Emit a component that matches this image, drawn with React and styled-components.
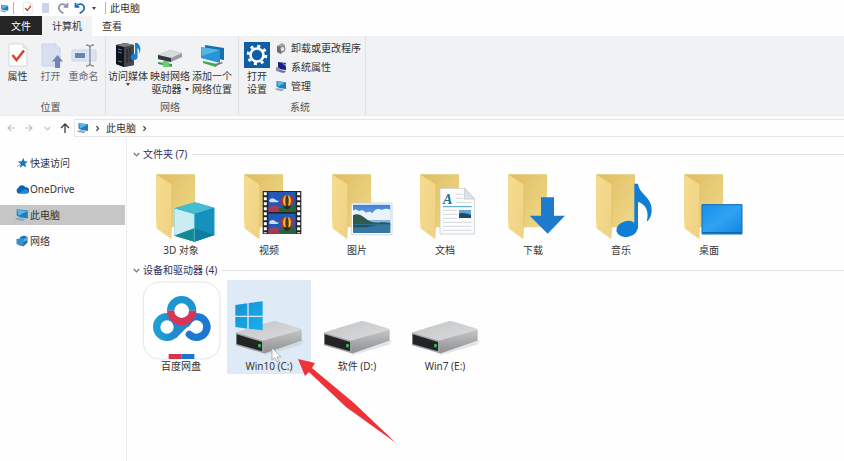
import React, { useState } from "react";
import styled, { createGlobalStyle } from "styled-components";

const GlobalStyle = createGlobalStyle`
  * {
    box-sizing: border-box;
  }

  body {
    margin: 0;
    background-color: #fefefe;
  }

  button {
    margin: 0;
    padding: 0;
    border: none;
    background: transparent;
    color: inherit;
    font: inherit;
  }

  svg {
    display: block;
    flex-shrink: 0;
  }
`;

const Window = styled.div`
  min-height: 100vh;
  display: flex;
  flex-direction: column;
  color: #333;
  font-family: "Noto Sans", "Noto Sans CJK SC", sans-serif;
  font-size: 10px;
  line-height: 14px;
`;

const TitleBar = styled.header`
  height: 16px;
  display: flex;
  align-items: center;
`;

const QuickButton = styled.button`
  width: ${({ $width }) => $width || 15}px;
  height: 16px;
  display: flex;
  align-items: center;
  justify-content: center;
`;

const Divider = styled.span`
  width: 1px;
  height: 12px;
  margin: 0 4px;
  background-color: #b5b5b5;
`;

const Title = styled.h1`
  margin: 0;
  font-size: 10px;
  font-weight: 400;
`;

const Tabs = styled.nav`
  height: 20px;
  display: flex;
`;

const Tab = styled.button`
  padding: 0 10px;
  color: #333;
  background-color: ${({ $active }) => ($active ? "#f1f2f4" : "transparent")};
`;

const FileTab = styled(Tab)`
  width: 42px;
  height: 19px;
  color: #fff;
  background-color: #262626;
`;

const Ribbon = styled.section`
  display: flex;
  background-color: #f1f2f4;
  border-bottom: 1px solid #ebecee;
`;

const Group = styled.div`
  padding: 5px 4px 0 0;
  display: flex;
  flex-direction: column;
  border-right: 1px solid #dfe0e3;
`;

const GroupBody = styled.div`
  display: flex;
  height: 55px;
  padding: 0 ${({ $pad }) => $pad || 0}px;
`;

const GroupLabel = styled.div`
  padding: 4px 0 1px;
  text-align: center;
  color: #555;
`;

const RibbonButton = styled.button`
  width: ${({ $width }) => $width}px;
  display: flex;
  flex-direction: column;
  align-items: center;
  line-height: 13px;
  white-space: nowrap;
  color: ${({ $dim }) => ($dim ? "#6c6c70" : "#333")};

  svg + span {
    margin-top: 1px;
  }
`;

const Caption = styled.span`
  display: flex;
  align-items: center;
  gap: 3px;
`;

const SmallList = styled.div`
  display: flex;
  flex-direction: column;
  gap: 5px;
`;

const SmallButton = styled.button`
  display: flex;
  align-items: center;
  gap: 4px;
`;

const AddressRow = styled.div`
  margin-top: 3px;
  padding-left: 2px;
  height: 18px;
  display: flex;
  align-items: center;
`;

const NavButton = styled.button`
  width: 18px;
  height: 18px;
  display: flex;
  align-items: center;
  justify-content: center;
`;

const AddressBox = styled.div`
  flex: 1;
  height: 18px;
  padding-left: 2px;
  display: flex;
  align-items: center;
  gap: 5px;
  border: 1px solid #e6e6e8;
  border-right: none;
`;

const Body = styled.div`
  flex: 1;
  display: flex;
`;

const Sidebar = styled.nav`
  width: 127px;
  padding: 16px 1px 0 0;
  display: flex;
  flex-direction: column;
  gap: 6px;
  border-right: 1px solid #efefef;
`;

const SideItem = styled.button`
  height: 20px;
  padding-left: 15px;
  display: flex;
  align-items: center;
  gap: 1px;
  background-color: ${({ $active }) => ($active ? "#c6c6c6" : "transparent")};
`;

const Content = styled.main`
  flex: 1;
  padding: 7px 0 0 6px;
`;

const SectionHeader = styled.h2`
  margin: 0;
  height: 20px;
  display: flex;
  align-items: center;
  gap: 3px;
  font-size: 10px;
  font-weight: 400;
  color: #2f3160;

  &::after {
    content: "";
    flex: 1;
    height: 1px;
    margin-left: 2px;
    background-color: #e2e2e4;
  }
`;

const Tiles = styled.div`
  padding: 0 0 2px 6px;
  display: grid;
  grid-template-columns: repeat(auto-fill, 84px);
  gap: 4px;
`;

const Slot = styled.div`
  position: relative;
`;

const Tile = styled.button`
  width: 84px;
  height: 94px;
  display: block;
  text-align: center;
  background-color: ${({ $selected }) => ($selected ? "#deeaf6" : "transparent")};

  svg {
    overflow: visible;
  }

  span {
    display: block;
    height: 16px;
    line-height: 16px;
  }
`;

const CursorIcon = styled.svg`
  position: absolute;
  left: 43px;
  top: 67px;
  pointer-events: none;
`;

const PointerArrow = styled.svg`
  position: absolute;
  left: 70px;
  top: 78px;
  z-index: 1;
  pointer-events: none;
`;

const Defs = styled.svg`
  position: absolute;
`;

const PcIcon = ({ size = 12 }) => (
  <svg width={size} height={size} viewBox="0 0 12 12">
    <path d="M1.5 1 11 2.2V9L4.5 8 1.5 6.6Z" fill="#1d7fc0" />
    <path d="M2.2 1.6 10.4 2.8 3 6.5Z" fill="#5cb7e6" />
    <path d="M.5 8.6 4 8.2 9 9.6 6.5 11.3.5 9.8Z" fill="#8fa9bd" />
  </svg>
);

const Caret = () => (
  <svg width="4" height="3" viewBox="0 0 4 3">
    <path d="M0 0H4L2 3Z" fill="#444" />
  </svg>
);

const Chevron = ({ down, color = "#444" }) => (
  <svg width="7" height="7" viewBox="0 0 7 7" fill="none" stroke={color} strokeWidth="1.2">
    <path d={down ? "M.8 2 3.5 4.8 6.2 2" : "M2.4 1.2 4.6 3.5 2.4 5.8"} />
  </svg>
);

const Turn = ({ flip, color }) => (
  <svg width="12" height="12" viewBox="0 0 12 12" fill="none" stroke={color} strokeWidth="1.7">
    <g transform={flip ? "translate(12 0) scale(-1 1)" : undefined}>
      <path d="M1.5 1V4.8H5.3" />
      <path d="M2 4.3C4 1.5 8 1.3 9.6 3.8 11.3 6.8 9 9.8 5.6 11.3" />
    </g>
  </svg>
);

const CheckDoc = ({ width, height }) => (
  <svg width={width} height={height} viewBox="0 0 24 28">
    <path d="M3 3H17L21 7V25H3Z" fill="#fff" stroke="#d5d7db" />
    <path d="M17 3V7H21" fill="#eceef1" stroke="#d5d7db" />
    <path d="M6.5 14 10.5 19 18 9.5" fill="none" stroke="#cf4a2c" strokeWidth="2.6" />
  </svg>
);

const OpenIcon = () => (
  <svg width="28" height="28" viewBox="0 0 28 28">
    <path d="M5 3H19L23 7V25H5Z" fill="#d8e0f0" stroke="#c8d2e6" />
    <path d="M19 3V7H23" fill="#eef2f9" stroke="#c8d2e6" />
    <path d="M20.500 14 26 20.500H23V27H18V20.500H15Z" fill="#7286ad" />
  </svg>
);

const RenameIcon = () => (
  <svg width="28" height="28" viewBox="0 0 28 28">
    <path d="M2 9H26V20H2Z" fill="#dbe4f3" stroke="#c9d5e8" />
    <path d="M5 12H15V17H5Z" fill="#6c84ab" />
    <path d="M16 4Q20 4 20 7Q20 4 24 4M20 7V22M16 25Q20 25 20 22Q20 25 24 25" fill="none" stroke="#8a8d94" strokeWidth="1.4" />
  </svg>
);

const MediaIcon = () => (
  <svg width="28" height="28" viewBox="0 0 28 28">
    <path d="M2 4 11 2 20 4V24L10 26 2 23Z" fill="#2b2e33" />
    <path d="M2 4 10 6V26L2 23Z" fill="#111418" />
    <path d="M10 6 20 4V24L10 26Z" fill="#43474e" />
    <path d="M2 4 11 2 20 4 10 6Z" fill="#777d86" />
    <path d="M4 8 8 9M4 11 8 12M4 20 8 21" stroke="#3f86c9" />
    <path d="M13 8V22M16 7V21" stroke="#222" />
    <ellipse cx="20" cy="16" rx="3.500" ry="3" fill="#1681cf" />
    <path d="M21 16V2H23.500Q28 6 25.500 13Q25.500 8 23.500 7V16Z" fill="#1681cf" />
  </svg>
);

const MapDriveIcon = () => (
  <svg width="28" height="28" viewBox="0 0 28 28">
    <path d="M2 14 14 9 26 12V16L15 21 2 18Z" fill="#999da1" />
    <path d="M2 14 14 9 26 12 15 17Z" fill="#d9dadc" />
    <path d="M2 14 15 17V21L2 18Z" fill="#33383b" />
    <path d="M2 21 16 23V26L2 23Z" fill="#3c9f4c" />
    <path d="M7 20H13V26H7Z" fill="#6ecb75" />
  </svg>
);

const NetPlaceIcon = () => (
  <svg width="28" height="28" viewBox="0 0 28 28">
    <path d="M7 4 26 7V19L7 16Z" fill="#1770ad" />
    <path d="M3 6 22 9V22L3 17Z" fill="#2894d3" />
    <path d="M3 6 22 9 4 15Z" fill="#55b6e6" />
    <path d="M5 20 19 23 18 26 5 22Z" fill="#3fa653" />
    <path d="M17 23 24 21 25 22 18 25Z" fill="#777" />
  </svg>
);

const SettingsIcon = () => (
  <svg width="28" height="28" viewBox="0 0 28 28">
    <path d="M1 1H27V27H1Z" fill="#0f5fa8" />
    <circle cx="14" cy="14" r="6.500" fill="none" stroke="#fff" strokeWidth="2.600" />
    <circle cx="14" cy="14" r="8.800" fill="none" stroke="#fff" strokeWidth="3" strokeDasharray="3.000 3.911" />
  </svg>
);

const UninstallIcon = () => (
  <svg width="12" height="12" viewBox="0 0 12 12">
    <path d="M2 4 7 1 10 3V9L6 12 2 10Z" fill="#aaa39a" />
    <path d="M2 4 6 5V12L2 10Z" fill="#706b66" />
    <circle cx="7.500" cy="7" r="2.500" fill="#e6e6e6" stroke="#777" />
  </svg>
);

const SystemIcon = () => (
  <svg width="12" height="12" viewBox="0 0 12 12">
    <path d="M3 1 11 2V9L3 8Z" fill="#1b1f86" />
    <path d="M7 2 11 3V6Z" fill="#7c8df0" />
    <path d="M1 6 5 7V11L1 10Z" fill="#8a93a5" />
    <path d="M5 9 11 10 9 12 4 11Z" fill="#6a6f96" />
  </svg>
);

const StarIcon = () => (
  <svg width="14" height="14" viewBox="0 0 14 14">
    <path d="M8.500 2 9.500 5.300 13 5.600 10.200 7.800 11.200 11.500 8 9.400 4.800 11.800 5.600 8 3 5.600 6.600 5.300Z" fill="#1a78bd" />
    <path d="M2 10.500 5 8.500" stroke="#69add8" />
  </svg>
);

const CloudIcon = () => (
  <svg width="14" height="14" viewBox="0 0 14 14">
    <path d="M3.500 11.500A3 3 0 0 1 3.200 6 4 4 0 0 1 10.400 5.300 3 3 0 0 1 11.500 11.500Z" fill="#0f62b5" />
    <path d="M3.500 11.500 9.500 7.500A3 3 0 0 1 13.600 9.800 2 2 0 0 1 11.500 11.500Z" fill="#1f8ade" />
  </svg>
);

const NetworkIcon = () => (
  <svg width="14" height="14" viewBox="0 0 14 14">
    <path d="M5 3 9 1.500 12.500 3V8.500L8.500 12.500 5 11Z" fill="#1d72b4" />
    <path d="M1.500 5 6.500 4 8.500 5V11L5.500 12 1.500 10Z" fill="#3a8fcb" />
    <path d="M8.500 5 12.500 3V6L8.500 8Z" fill="#5eb0e2" />
  </svg>
);

// every tile drawing uses a 252x234 canvas, three units to the pixel
const TileArt = ({ children }) => (
  <svg width="84" height="78" viewBox="0 0 252 234">
    {children}
  </svg>
);

const Folder = ({ children }) => (
  <TileArt>
    <path d="M52 31H168V190H90L52 170Z" fill="url(#folderBack)" />
    <path d="M52 31 92 56Q99 61 99 68V190L97 226 52 193Z" fill="url(#folderFront)" />
    <path d="M52 31 92 56Q99 61 99 68V190" fill="none" stroke="#d6b757" strokeWidth="1.500" />
    {children}
  </TileArt>
);

const Gradients = () => (
  <Defs width="0" height="0" aria-hidden="true">
    <defs>
      <linearGradient id="folderBack" x1="0" y1="0" x2="1" y2="1">
        <stop offset="0" stopColor="#dfbd62" />
        <stop offset="1" stopColor="#f0d98a" />
      </linearGradient>
      <linearGradient id="folderFront" x1="0" y1="0" x2="1" y2="1">
        <stop offset="0" stopColor="#f6dd91" />
        <stop offset="1" stopColor="#efd083" />
      </linearGradient>
      <linearGradient id="desktop" x1="0" y1="0" x2="1" y2="1">
        <stop offset="0" stopColor="#1590ea" />
        <stop offset="0.5" stopColor="#30a2f3" />
        <stop offset="1" stopColor="#0f86e0" />
      </linearGradient>
      <linearGradient id="driveTop" x1="0" y1="0" x2="1" y2="1">
        <stop offset="0" stopColor="#c3c4c6" />
        <stop offset="1" stopColor="#dcdddf" />
      </linearGradient>
      <linearGradient id="driveSide" x1="0" y1="0" x2="0" y2="1">
        <stop offset="0" stopColor="#c4c5c7" />
        <stop offset="1" stopColor="#8f9092" />
      </linearGradient>
      <linearGradient id="winLogo" x1="0" y1="0" x2="1" y2="1">
        <stop offset="0" stopColor="#1691d2" />
        <stop offset="1" stopColor="#18b0ec" />
      </linearGradient>
      <linearGradient id="panLeft" x1="0" y1="0" x2="1" y2="0">
        <stop offset="0" stopColor="#1e9fd6" />
        <stop offset="1" stopColor="#1b87cf" />
      </linearGradient>
      <linearGradient id="sky" x1="0" y1="0" x2="0" y2="1">
        <stop offset="0" stopColor="#3e7fd6" />
        <stop offset="1" stopColor="#b7daf5" />
      </linearGradient>
    </defs>
  </Defs>
);

const ObjectsArt = () => (
  <Folder>
    <path d="M168 115 226 131V213L166 233 106 215V133Z" fill="#2aa3bf" />
    <path d="M106 133 166 150V193L106 215Z" fill="#c9edf0" />
    <path d="M106 133 168 115 226 131 166 150Z" fill="#45bdd0" />
    <path d="M106 215 166 193 226 213 166 233Z" fill="#138a93" />
    <path d="M166 150V233L226 213V131Z" fill="#128bbb" opacity="0.8" />
    <path d="M166 193V233L226 213Z" fill="#0c6f92" opacity="0.5" />
    <path d="M166 150V233" stroke="#6fd0de" strokeWidth="2" />
  </Folder>
);

const Balloon = ({ y }) => (
  <g transform={`translate(124 ${y})`}>
    <path d="M0 0H82V60H0Z" fill="#2259b8" />
    <path d="M2 25Q10 14 20 22T34 24L28 31H4Z" fill="#c9dcf2" />
    <path d="M0 47Q14 36 30 44T56 40L82 46V60H0Z" fill="#a63a54" />
    <path d="M30 50Q50 38 82 42V60H34Z" fill="#246438" />
    <ellipse cx="56" cy="27" rx="20" ry="18" fill="#bb2b2d" />
    <ellipse cx="56" cy="27" rx="12" ry="18" fill="#eebc2f" />
    <ellipse cx="56" cy="27" rx="5" ry="18" fill="#4b3420" />
    <path d="M44 41H68L61 51H51Z" fill="#2d2a1c" />
  </g>
);

const VideoArt = () => (
  <Folder>
    <path d="M107 81H223V210H107Z" fill="#24252b" />
    <Balloon y={84} />
    <Balloon y={149} />
    <path d="M115 85V208M215 85V208" stroke="#fff" strokeWidth="9" strokeDasharray="9 6" />
  </Folder>
);

const PictureArt = () => (
  <Folder>
    <path d="M109 117H231V212H109Z" fill="#fff" stroke="#b9c4cc" strokeWidth="2" />
    <path d="M114 122H226V207H114Z" fill="url(#sky)" />
    <path d="M114 140Q124 132 132 142 144 134 152 146 166 140 172 148 184 128 200 138 216 130 226 138V168H114Z" fill="#e9f3fb" />
    <path d="M114 154Q130 144 150 162T200 174L226 176V184H114Z" fill="#2d5a4c" />
    <path d="M114 181H226V207H114Z" fill="#3577a0" />
    <path d="M114 184H190L150 190H114Z" fill="#214f58" />
  </Folder>
);

const DocumentArt = () => (
  <Folder>
    <path d="M111 73H186L214 104V210H111Z" fill="#fbfcfd" stroke="#bcc2c8" strokeWidth="2" />
    <path d="M184 73V105H214Z" fill="#dfe3e7" stroke="#bcc2c8" strokeWidth="2" />
    <path d="M158 91H180M158 103H180M158 115H206M120 139H162M120 151H162M120 163H162M120 175H206M120 187H206M120 199H206" stroke="#c2c9cf" strokeWidth="2" />
    <path d="M120 128H206" stroke="#4a9fc6" strokeWidth="3" />
    <text x="120" y="119" fontFamily="Liberation Serif, serif" fontSize="42" fontWeight="700" fontStyle="italic" fill="#1f6f97">
      A
    </text>
    <path d="M168 138H204V162H168Z" fill="#5fa3d8" />
    <path d="M168 149Q182 144 204 153V162H168Z" fill="#1d4c62" />
  </Folder>
);

const DownloadArt = () => (
  <Folder>
    <path d="M150 100H189V155H222L170 209 116 155H150Z" fill="#1c7ccb" />
  </Folder>
);

const MusicArt = () => (
  <Folder>
    <ellipse cx="144" cy="195" rx="32" ry="24" fill="#0f7fd6" transform="rotate(-12 144 195)" />
    <path d="M166 59H177C181 92 220 98 218 140 217 158 210 168 203 173 210 148 205 122 177 113V194H166Z" fill="#0f7fd6" />
  </Folder>
);

const DesktopArt = () => (
  <Folder>
    <path d="M105 122H225V210H105Z" fill="url(#desktop)" stroke="#0b6cb8" strokeWidth="3" />
    <path d="M107 206H224" stroke="#0b69ad" strokeWidth="4" />
  </Folder>
);

const BaiduArt = () => (
  <TileArt>
    <rect x="13" y="6" width="230" height="231" rx="48" fill="#fff" stroke="#e5e5e8" strokeWidth="3" />
    <g fill="none" strokeWidth="22">
      <circle cx="84" cy="141" r="31" stroke="url(#panLeft)" />
      <path d="M144 130C154 112 164 110 173 110A31 31 0 1 1 151 163" stroke="#1c79d2" strokeLinecap="round" />
      <path d="M104 166 152 118" stroke="#2489cc" />
      <path d="M95 92A33 33 0 0 1 161 92" stroke="#1c96cf" />
      <path d="M161 92A33 33 0 0 1 95 92" stroke="#d83655" />
    </g>
    <path d="M89 222H128V237H89Z" fill="#d3344c" />
    <path d="M128 222H166V237H128Z" fill="#1c74cf" />
  </TileArt>
);

const DriveArt = ({ windows }) => (
  <TileArt>
    <path d="M109 220 232 181 224 194 112 226Z" fill="#bfc2c5" opacity="0.4" />
    <path d="M27 160Q27 157 31 156L136 124Q142 122 148 124L218 145Q224 147 224 151L109 185Z" fill="url(#driveTop)" />
    <path d="M107 182 224 149V182L116 219Q109 221 107 218Z" fill="url(#driveSide)" />
    <path d="M27 158 109 182V220L27 196Z" fill="#a2a3a5" />
    <path d="M29 163 105 186V214L29 192Z" fill="#232426" />
    <path d="M94 192H101V202H94Z" fill="#36d04f" />
    {windows && (
      <path d="M25 75 61 70V107H25ZM65 69 107 64V107H65ZM25 111H61V146L25 141ZM65 111H107V151L65 146Z" fill="url(#winLogo)" />
    )}
  </TileArt>
);

const WindowsDrive = () => <DriveArt windows />;

const folders = [
  { name: "3D 对象", Art: ObjectsArt },
  { name: "视频", Art: VideoArt },
  { name: "图片", Art: PictureArt },
  { name: "文档", Art: DocumentArt },
  { name: "下载", Art: DownloadArt },
  { name: "音乐", Art: MusicArt },
  { name: "桌面", Art: DesktopArt },
];

const drives = [
  { name: "百度网盘", Art: BaiduArt },
  { name: "Win10 (C:)", Art: WindowsDrive, marked: true },
  { name: "软件 (D:)", Art: DriveArt },
  { name: "Win7 (E:)", Art: DriveArt },
];

const places = [
  { name: "快速访问", Icon: StarIcon },
  { name: "OneDrive", Icon: CloudIcon },
  { name: "此电脑", Icon: () => <PcIcon size={14} /> },
  { name: "网络", Icon: NetworkIcon },
];

const App = () => {
  const [place, setPlace] = useState("此电脑");
  const [selected, setSelected] = useState("Win10 (C:)");

  const renderTile = ({ name, Art, marked }) => (
    <Slot key={name}>
      <Tile $selected={selected === name} onClick={() => setSelected(name)}>
        <Art />
        <span>{name}</span>
      </Tile>
      {marked && (
        <>
          <CursorIcon width="12" height="16" viewBox="0 0 12 16">
            <path d="M2 1V13L5 10.500 7 15 9 14 7 9.800H11Z" fill="#fff" stroke="#9da3aa" strokeWidth="0.8" />
          </CursorIcon>
          <PointerArrow width="100" height="86" viewBox="0 0 100 86">
            <path d="M1 1 18 5 15 10 57 45 99 85 49 49 12 14 8 18Z" fill="#ee3338" />
          </PointerArrow>
        </>
      )}
    </Slot>
  );

  return (
    <Window>
      <GlobalStyle />
      <Gradients />
      <TitleBar>
        <PcIcon size={9} />
        <Divider />
        <QuickButton $width={20} aria-label="属性">
          <CheckDoc width={12} height={14} />
        </QuickButton>
        <QuickButton $width={14} aria-label="新建文件夹">
          <svg width="7" height="12" viewBox="0 0 7 12">
            <path d="M0 1H7V11H0Z" fill="#cbd3e4" />
          </svg>
        </QuickButton>
        <QuickButton $width={22} aria-label="恢复">
          <Turn flip color="#8b93a6" />
        </QuickButton>
        <QuickButton $width={12} aria-label="撤消">
          <Turn color="#1f6cae" />
        </QuickButton>
        <QuickButton aria-label="自定义快速访问工具栏">
          <Caret />
        </QuickButton>
        <Divider />
        <Title>此电脑</Title>
      </TitleBar>

      <Tabs>
        <FileTab>文件</FileTab>
        <Tab $active>计算机</Tab>
        <Tab>查看</Tab>
      </Tabs>

      <Ribbon>
        <Group>
          <GroupBody $pad={1}>
            <RibbonButton $width={33}>
              <CheckDoc width={28} height={28} />
              <span>属性</span>
            </RibbonButton>
            <RibbonButton $width={33} $dim>
              <OpenIcon />
              <span>打开</span>
            </RibbonButton>
            <RibbonButton $width={33} $dim>
              <RenameIcon />
              <span>重命名</span>
            </RibbonButton>
          </GroupBody>
          <GroupLabel>位置</GroupLabel>
        </Group>
        <Group>
          <GroupBody $pad={1}>
            <RibbonButton $width={42}>
              <MediaIcon />
              <span>访问媒体</span>
              <Caret />
            </RibbonButton>
            <RibbonButton $width={42}>
              <MapDriveIcon />
              <span>映射网络</span>
              <Caption>
                驱动器
                <Caret />
              </Caption>
            </RibbonButton>
            <RibbonButton $width={42}>
              <NetPlaceIcon />
              <span>添加一个</span>
              <span>网络位置</span>
            </RibbonButton>
          </GroupBody>
          <GroupLabel>网络</GroupLabel>
        </Group>
        <Group>
          <GroupBody>
            <RibbonButton $width={36}>
              <SettingsIcon />
              <span>打开</span>
              <span>设置</span>
            </RibbonButton>
            <SmallList>
              <SmallButton>
                <UninstallIcon />
                卸载或更改程序
              </SmallButton>
              <SmallButton>
                <SystemIcon />
                系统属性
              </SmallButton>
              <SmallButton>
                <PcIcon />
                管理
              </SmallButton>
            </SmallList>
          </GroupBody>
          <GroupLabel>系统</GroupLabel>
        </Group>
      </Ribbon>

      <AddressRow>
        <NavButton aria-label="后退">
          <svg width="8" height="8" viewBox="0 0 8 8" fill="none" stroke="#bdbdbd" strokeWidth="1.200">
            <path d="M8 4H1M4 1 1 4 4 7" />
          </svg>
        </NavButton>
        <NavButton aria-label="前进">
          <svg width="8" height="8" viewBox="0 0 8 8" fill="none" stroke="#bdbdbd" strokeWidth="1.200">
            <path d="M0 4H7M4 1 7 4 4 7" />
          </svg>
        </NavButton>
        <NavButton aria-label="最近位置">
          <Chevron down color="#c4c4c4" />
        </NavButton>
        <NavButton aria-label="上移">
          <svg width="10" height="10" viewBox="0 0 10 10" fill="none" stroke="#3b3b3b" strokeWidth="1.300">
            <path d="M5 10V1M1 5 5 1 9 5" />
          </svg>
        </NavButton>
        <AddressBox>
          <PcIcon />
          <Chevron />
          <button>此电脑</button>
          <Chevron />
        </AddressBox>
      </AddressRow>

      <Body>
        <Sidebar>
          {places.map(({ name, Icon }) => (
            <SideItem key={name} $active={place === name} onClick={() => setPlace(name)}>
              <Icon />
              {name}
            </SideItem>
          ))}
        </Sidebar>
        <Content>
          <SectionHeader>
            <Chevron down color="#6f7396" />
            文件夹 (7)
          </SectionHeader>
          <Tiles>{folders.map(renderTile)}</Tiles>
          <SectionHeader>
            <Chevron down color="#6f7396" />
            设备和驱动器 (4)
          </SectionHeader>
          <Tiles>{drives.map(renderTile)}</Tiles>
        </Content>
      </Body>
    </Window>
  );
};

export default App;
